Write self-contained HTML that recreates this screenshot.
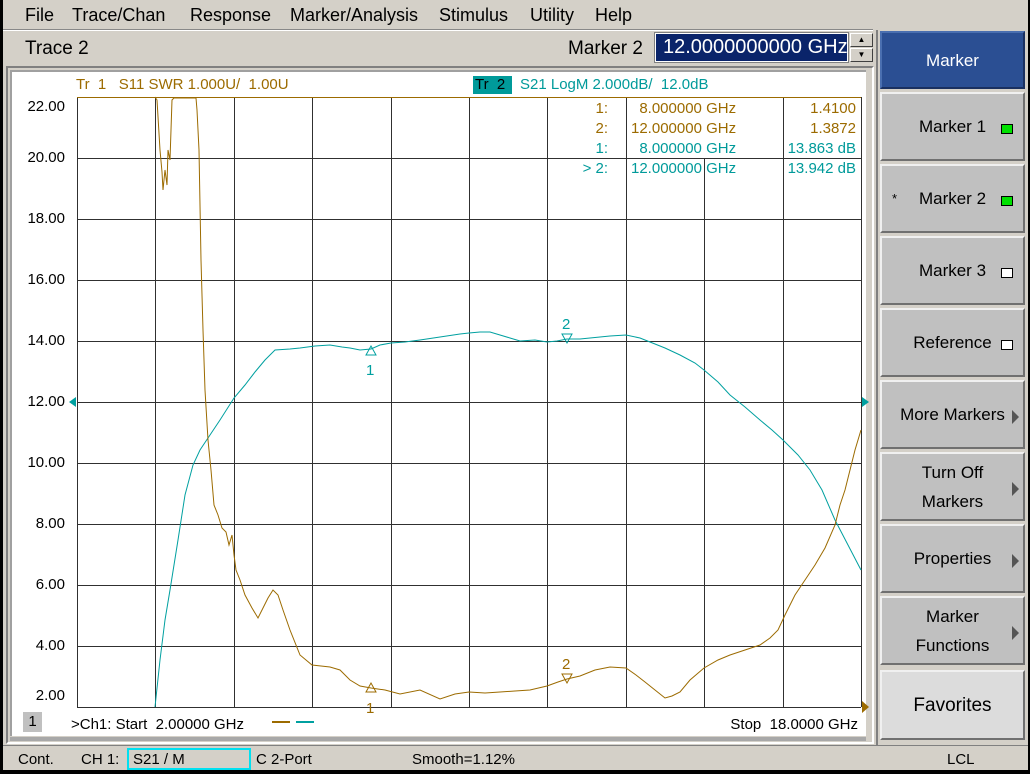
<!DOCTYPE html>
<html><head><meta charset="utf-8"><style>
*{margin:0;padding:0;box-sizing:border-box}
body{width:1030px;height:774px;background:#000;position:relative;overflow:hidden;font-family:"Liberation Sans",sans-serif}
.a{position:absolute}
.btn{position:absolute;left:880px;width:145px;height:69px;background:#c0c0c0;border:2px solid;border-color:#f0f0f0 #707070 #707070 #f0f0f0;font-size:17px;color:#000;text-align:center;display:flex;align-items:center;justify-content:center;line-height:29px}
.led{position:absolute;right:10px;top:30px;width:12px;height:10px;border:1px solid #000;background:#fff}
.arr{position:absolute;right:4px;top:28px;width:0;height:0;border-top:7px solid transparent;border-bottom:7px solid transparent;border-left:7px solid #555}
</style></head><body>
<div class="a" style="left:0;top:0;width:1028px;height:770px;background:#d4d0c8"></div>
<div class="a" style="left:0;top:0;width:3px;height:770px;background:#000"></div>
<!-- menu -->
<div class="a" style="left:25px;top:5px;font-size:18px;word-spacing:0">File</div>
<div class="a" style="left:72px;top:5px;font-size:18px">Trace/Chan</div>
<div class="a" style="left:190px;top:5px;font-size:18px">Response</div>
<div class="a" style="left:290px;top:5px;font-size:18px">Marker/Analysis</div>
<div class="a" style="left:439px;top:5px;font-size:18px">Stimulus</div>
<div class="a" style="left:530px;top:5px;font-size:18px">Utility</div>
<div class="a" style="left:595px;top:5px;font-size:18px">Help</div>
<div class="a" style="left:3px;top:29px;width:870px;height:1px;background:#888"></div>
<div class="a" style="left:3px;top:30px;width:870px;height:1px;background:#fff"></div>
<div class="a" style="left:25px;top:38px;font-size:19px">Trace 2</div>
<div class="a" style="left:568px;top:38px;font-size:19px">Marker 2</div>
<div class="a" style="left:655px;top:33px;width:193px;height:29px;border:1px solid #fff;background:#0a246a;outline:1px solid #808080"></div>
<div class="a" style="left:663px;top:36px;font-size:20px;color:#fff">12.0000000000 GHz</div>
<div class="a" style="left:850px;top:33px;width:23px;height:14px;background:#d4d0c8;border:1px solid;border-color:#fff #404040 #404040 #fff;font-size:8px;text-align:center;line-height:12px">▲</div>
<div class="a" style="left:850px;top:48px;width:23px;height:14px;background:#d4d0c8;border:1px solid;border-color:#fff #404040 #404040 #fff;font-size:8px;text-align:center;line-height:12px">▼</div>
<!-- plot panel -->
<div class="a" style="left:6px;top:66px;width:868px;height:678px;border:2px solid;border-color:#808080 #fff #fff #808080;background:#d4d0c8"></div>
<div class="a" style="left:10px;top:70px;width:856px;height:666px;background:#fff;border-left:2px solid #a0a0a0;border-top:2px solid #a0a0a0"></div>
<div class="a" style="left:10px;top:737px;width:856px;height:4px;background:#a8a8a8"></div>
<div class="a" style="left:76px;top:76px;font-size:15px;color:#9c6b00;white-space:pre">Tr  1   S11 SWR 1.000U/  1.00U</div>
<div class="a" style="left:473px;top:76px;width:39px;height:18px;background:#009a9a"></div>
<div class="a" style="left:475px;top:76px;font-size:15px;color:#000;white-space:pre">Tr  2</div>
<div class="a" style="left:520px;top:76px;font-size:15px;color:#009a9a;white-space:pre">S21 LogM 2.000dB/  12.0dB</div>
<svg class="a" style="left:0;top:0" width="1030" height="774">
<g stroke="#303030" stroke-width="1" fill="none" shape-rendering="crispEdges">
<path d="M155.5 97V707M234.5 97V707M312.5 97V707M391.5 97V707M469.5 97V707M547.5 97V707M626.5 97V707M704.5 97V707M783.5 97V707M77.5 97V707M861.5 97V707"/>
<path d="M77 158.5H861M77 219.5H861M77 280.5H861M77 341.5H861M77 402.5H861M77 463.5H861M77 524.5H861M77 585.5H861M77 646.5H861M77 707.5H861"/>
</g>
<rect x="583" y="98" width="278" height="60" fill="#fff"/>
<path d="M583 158.5H861M626.5 98V158M783.5 98V158" stroke="#303030" shape-rendering="crispEdges"/>
<path d="M77 97.5H861" stroke="#9c6b00"/>
<polyline fill="none" stroke="#00a0a0" stroke-width="1" points="155,707 160,660 165,620 170,590 178,540 185,495 193,465 200,450 210,435 220,420 234,398 245,385 255,372 265,360 275,350 290,349 300,348 315,346 330,345 342,347 350,348 360,350 371,349 380,345 391,343 405,342 420,340 440,337 460,334 469,333 480,332 490,332 500,335 510,338 520,341 535,340 547,342 557,341 567,339 580,339 590,338 600,337 610,336 626,335 640,338 650,342 665,348 680,355 695,363 704,370 718,382 730,395 745,407 760,420 772,430 783,440 798,455 810,470 822,490 835,520 848,545 861,570"/>
<polyline fill="none" stroke="#9c6b00" stroke-width="1" points="155,97 157,100 160,150 162,172 163,190 165,170 167,185 168,150 170,160 171,130 172,100 174,98 196,98 197,110 199,150 201,260 203,330 205,390 208,440 211,470 214,505 218,515 222,528 226,532 229,545 232,535 234,555 236,570 240,580 245,595 252,608 258,618 263,608 268,598 273,590 278,595 283,610 290,630 300,655 312,665 330,667 340,670 350,680 360,686 371,688 385,690 400,694 420,690 440,699 455,694 469,692 485,693 500,692 515,691 530,690 547,686 558,682 567,679 580,676 595,670 610,667 626,668 636,675 645,682 655,690 665,698 672,696 680,692 690,680 704,668 718,660 730,655 745,650 760,645 770,638 778,630 785,615 795,595 805,580 815,565 825,548 835,525 840,505 845,490 850,470 855,450 861,430"/>
<g font-family="Liberation Sans,sans-serif" font-size="15">
<path d="M366 355 L371 346 L376 355 Z" fill="none" stroke="#00a0a0"/>
<text x="366" y="375" fill="#00a0a0">1</text>
<path d="M562 334 L567 343 L572 334 Z" fill="none" stroke="#00a0a0"/>
<text x="562" y="329" fill="#00a0a0">2</text>
<path d="M366 692 L371 683 L376 692 Z" fill="none" stroke="#9c6b00"/>
<text x="366" y="713" fill="#9c6b00">1</text>
<path d="M562 674 L567 683 L572 674 Z" fill="none" stroke="#9c6b00"/>
<text x="562" y="669" fill="#9c6b00">2</text>
</g>
<path d="M69 402 L76 397 L76 407Z" fill="#00a0a0"/>
<path d="M869 402 L862 397 L862 407Z" fill="#00a0a0"/>
<path d="M869 707 L862 701 L862 713Z" fill="#9c6b00"/>
<path d="M272 722H290" stroke="#9c6b00" stroke-width="2"/>
<path d="M296 722H314" stroke="#00a0a0" stroke-width="2"/>
</svg>
<div class="a" style="left:24px;top:98px;font-size:15px;line-height:18px;text-align:right;width:41px">22.00</div>
<div class="a" style="left:24px;top:149px;font-size:15px;text-align:right;width:41px">20.00</div>
<div class="a" style="left:24px;top:210px;font-size:15px;text-align:right;width:41px">18.00</div>
<div class="a" style="left:24px;top:271px;font-size:15px;text-align:right;width:41px">16.00</div>
<div class="a" style="left:24px;top:332px;font-size:15px;text-align:right;width:41px">14.00</div>
<div class="a" style="left:24px;top:393px;font-size:15px;text-align:right;width:41px">12.00</div>
<div class="a" style="left:24px;top:454px;font-size:15px;text-align:right;width:41px">10.00</div>
<div class="a" style="left:24px;top:515px;font-size:15px;text-align:right;width:41px">8.00</div>
<div class="a" style="left:24px;top:576px;font-size:15px;text-align:right;width:41px">6.00</div>
<div class="a" style="left:24px;top:637px;font-size:15px;text-align:right;width:41px">4.00</div>
<div class="a" style="left:24px;top:687px;font-size:15px;text-align:right;width:41px">2.00</div>
<!-- marker table -->
<div class="a" style="left:583px;top:99px;font-size:15px;line-height:20px;width:270px;white-space:pre">
<div style="position:absolute;right:245px;top:0;text-align:right;width:40px;color:#9c6b00">1:</div>
<div style="position:absolute;right:245px;top:20px;text-align:right;width:40px;color:#9c6b00">2:</div>
<div style="position:absolute;right:245px;top:40px;text-align:right;width:40px;color:#009a9a">1:</div>
<div style="position:absolute;right:245px;top:60px;text-align:right;width:40px;color:#009a9a">&gt; 2:</div>
<div style="position:absolute;left:48px;top:0;color:#9c6b00">  8.000000 GHz</div>
<div style="position:absolute;left:48px;top:20px;color:#9c6b00">12.000000 GHz</div>
<div style="position:absolute;left:48px;top:40px;color:#009a9a">  8.000000 GHz</div>
<div style="position:absolute;left:48px;top:60px;color:#009a9a">12.000000 GHz</div>
<div style="position:absolute;right:-3px;top:0;color:#9c6b00">1.4100</div>
<div style="position:absolute;right:-3px;top:20px;color:#9c6b00">1.3872</div>
<div style="position:absolute;right:-3px;top:40px;color:#009a9a">13.863 dB</div>
<div style="position:absolute;right:-3px;top:60px;color:#009a9a">13.942 dB</div>
</div>
<div class="a" style="left:23px;top:712px;width:19px;height:20px;background:#c0c0c0;font-size:15px;text-align:center;line-height:20px">1</div>
<div class="a" style="left:71px;top:716px;font-size:15px;white-space:pre">&gt;Ch1: Start  2.00000 GHz</div>
<div class="a" style="left:717px;top:716px;font-size:15px;white-space:pre;width:141px;text-align:right">Stop  18.0000 GHz</div>
<!-- right panel -->
<div class="a" style="left:876px;top:30px;width:2px;height:715px;background:#808080"></div>
<div class="btn" style="top:31px;height:58px;background:#2b4f93;color:#fff;border-color:#4a6fb0 #1a3060 #1a3060 #4a6fb0">Marker</div>
<div class="btn" style="top:92px">Marker 1<div class="led" style="background:#00e000"></div></div>
<div class="btn" style="top:164px"><span style="position:absolute;left:10px;font-size:13px">*</span>Marker 2<div class="led" style="background:#00e000"></div></div>
<div class="btn" style="top:236px">Marker 3<div class="led"></div></div>
<div class="btn" style="top:308px">Reference<div class="led"></div></div>
<div class="btn" style="top:380px">More Markers<div class="arr"></div></div>
<div class="btn" style="top:452px">Turn Off<br>Markers<div class="arr"></div></div>
<div class="btn" style="top:524px">Properties<div class="arr"></div></div>
<div class="btn" style="top:596px">Marker<br>Functions<div class="arr"></div></div>
<div class="btn" style="top:670px;height:70px;background:#dcdcdc;font-size:19px">Favorites</div>
<!-- status -->
<div class="a" style="left:3px;top:745px;width:1025px;height:1px;background:#808080"></div>
<div class="a" style="left:18px;top:751px;font-size:15px">Cont.</div>
<div class="a" style="left:81px;top:751px;font-size:15px">CH 1:</div>
<div class="a" style="left:127px;top:748px;width:124px;height:22px;border:2px solid #00e0f0"></div>
<div class="a" style="left:133px;top:751px;font-size:15px">S21 / M</div>
<div class="a" style="left:256px;top:751px;font-size:15px">C  2-Port</div>
<div class="a" style="left:412px;top:751px;font-size:15px">Smooth=1.12%</div>
<div class="a" style="left:947px;top:751px;font-size:15px">LCL</div>
</body></html>
